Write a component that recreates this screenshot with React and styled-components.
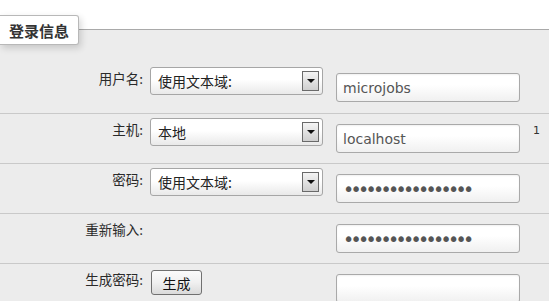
import React from "react";
import styled, { createGlobalStyle } from "styled-components";

const GlobalStyle = createGlobalStyle`
  html, body {
    margin: 0;
    padding: 0;
    background: #ececec;
  }
  body {
    font-family: "DejaVu Sans", "Noto Sans CJK SC", sans-serif;
    color: #333;
  }
`;

const Page = styled.div`
  width: 549px;
  height: 301px;
  overflow: hidden;
  background: #ececec;
`;

const Header = styled.div`
  position: relative;
  height: 29px;
  background: #fff;
  border-bottom: 1px solid #a9a9a9;
`;

const Tab = styled.div`
  position: absolute;
  left: 0;
  top: 15px;
  width: 78px;
  height: 28px;
  display: flex;
  align-items: center;
  justify-content: center;
  background: #fff;
  border: 1px solid #b8b8b8;
  border-left: none;
  border-radius: 0 3px 3px 0;
  box-shadow: 2px 3px 7px rgba(0, 0, 0, 0.16);
  font-family: "Noto Sans CJK SC", sans-serif;
  font-size: 15px;
  font-weight: bold;
  color: #333;
  z-index: 1;
`;

const Form = styled.div`
  padding-top: 33px;
`;

const Row = styled.div`
  box-sizing: border-box;
  height: 50px;
  padding-top: 4px;
  border-top: ${(p) => (p.$first ? "none" : "1px solid #c9c9c9")};
  display: grid;
  grid-template-columns: 150px 173px 13px 184px 13px 1fr;
  align-items: start;
`;

const Label = styled.div`
  grid-column: 1;
  margin-top: 3px;
  padding-right: 7px;
  text-align: right;
  font-family: "Noto Sans CJK SC", sans-serif;
  font-size: 13.5px;
  line-height: 16px;
  color: #2a2a2a;
`;

const Select = styled.div`
  grid-column: 2;
  box-sizing: border-box;
  height: 28px;
  display: flex;
  align-items: center;
  justify-content: space-between;
  padding: 0 3px 0 7px;
  background: linear-gradient(#ffffff, #ffffff 45%, #e9e9e9);
  border: 1px solid #a6a6a6;
  border-radius: 3px;
  font-family: "Noto Sans CJK SC", sans-serif;
  font-size: 14px;
  color: #222;
`;

const DropButton = styled.span`
  box-sizing: border-box;
  width: 17px;
  height: 20px;
  display: flex;
  align-items: center;
  justify-content: center;
  border: 1px solid #6a6a6a;
  background: linear-gradient(#f4f4f4, #cfcfcf);

  &::after {
    content: "";
    border-left: 4px solid transparent;
    border-right: 4px solid transparent;
    border-top: 4px solid #111;
  }
`;

const TextInput = styled.input`
  grid-column: 4;
  box-sizing: border-box;
  width: 184px;
  height: 29px;
  margin: 6px 0 0;
  padding: 0 6px;
  border: 1px solid #a9a9a9;
  border-radius: 3px;
  background: linear-gradient(#ffffff, #ffffff 40%, #f0f0f0);
  box-shadow: inset 0 1px 2px rgba(0, 0, 0, 0.06);
  font-family: "DejaVu Sans", sans-serif;
  font-size: ${(p) => (p.type === "password" ? "19px" : "14px")};
  letter-spacing: ${(p) => (p.type === "password" ? "-3.7px" : "0")};
  color: #555;
  outline: none;
`;

const Note = styled.span`
  grid-column: 6;
  margin-top: 6px;
  font-family: "DejaVu Sans", sans-serif;
  font-size: 11px;
  color: #333;
`;

const Button = styled.button`
  grid-column: 2;
  justify-self: start;
  box-sizing: border-box;
  width: 51px;
  height: 25px;
  margin: 2px 0 0 1px;
  padding: 0;
  border: 1px solid #707070;
  border-radius: 3px;
  background: linear-gradient(#fbfbfb, #f0f0f0 50%, #dadada);
  font-family: "Noto Sans CJK SC", sans-serif;
  font-size: 14px;
  color: #111;
`;

const fields = [
  { label: "用户名:", select: "使用文本域:", value: "microjobs" },
  { label: "主机:", select: "本地", value: "localhost", note: "1" },
  { label: "密码:", select: "使用文本域:", value: "microjobsmicrojob", password: true },
  { label: "重新输入:", value: "microjobsmicrojob", password: true },
  { label: "生成密码:", button: "生成", value: "" },
];

const App = () => {
  return (
    <Page>
      <GlobalStyle />
      <Header>
        <Tab>登录信息</Tab>
      </Header>
      <Form>
        {fields.map((f, i) => (
          <Row key={f.label} $first={i === 0}>
            <Label>{f.label}</Label>
            {f.select && (
              <Select>
                <span>{f.select}</span>
                <DropButton />
              </Select>
            )}
            {f.button && <Button>{f.button}</Button>}
            <TextInput
              type={f.password ? "password" : "text"}
              defaultValue={f.value}
            />
            {f.note && <Note>{f.note}</Note>}
          </Row>
        ))}
      </Form>
    </Page>
  );
};

export default App;
